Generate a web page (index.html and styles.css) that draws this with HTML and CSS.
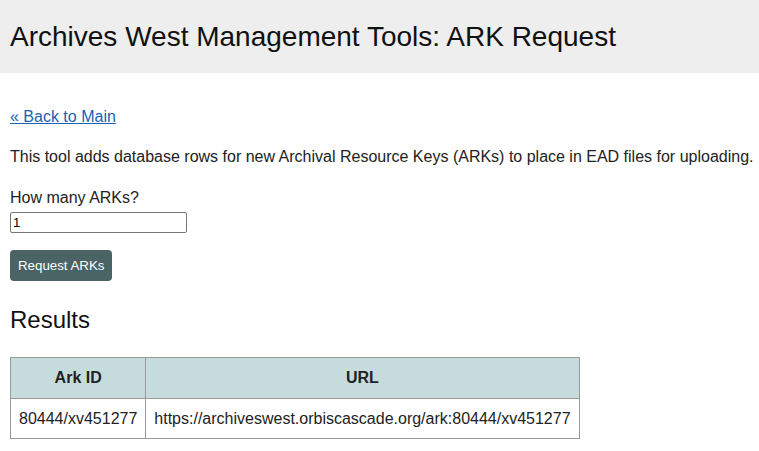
FILE: index.html
```html
<!DOCTYPE html>
<html>
<head>
<meta charset="utf-8">
<link rel="stylesheet" href="styles.css">
</head>
<body>
<header class="site-header">
  <h1 class="title">Archives West Management Tools: ARK Request</h1>
</header>
<main class="content">
  <p class="back"><a href="#">« Back to Main</a></p>
  <p class="intro">This tool adds database rows for new Archival Resource Keys (ARKs) to place in EAD files for uploading.</p>
  <form class="ark-form">
    <label class="field-label" for="count">How many ARKs?</label>
    <input class="field-input" id="count" type="text" value="1">
    <button class="btn" type="button">Request ARKs</button>
  </form>
  <h2 class="results-title">Results</h2>
  <table class="results">
    <thead>
      <tr><th>Ark ID</th><th>URL</th></tr>
    </thead>
    <tbody>
      <tr><td>80444/xv451277</td><td>https://archiveswest.orbiscascade.org/ark:80444/xv451277</td></tr>
    </tbody>
  </table>
</main>
</body>
</html>
```
FILE: styles.css
```css
html, body {
  margin: 0;
  padding: 0;
  background: #fff;
  font-family: "Liberation Sans", Arial, sans-serif;
  color: #222;
  font-size: 16px;
  white-space: nowrap;
}
.site-header {
  background: #eeeeee;
  height: 73px;
  display: flex;
  align-items: center;
  padding: 0 10px;
}
.title {
  margin: 0;
  font-weight: normal;
  font-size: 28px;
  color: #111;
}
.content {
  padding: 0 10px;
}
.back {
  margin: 35px 0 0;
}
.back a {
  color: #1a5fb4;
}
.intro {
  margin: 22px 0 0;
}
.ark-form {
  display: flex;
  flex-direction: column;
  align-items: flex-start;
  margin-top: 23px;
}
.field-label {
  line-height: 18px;
}
.field-input {
  margin-top: 5px;
  width: 171px;
  height: 17px;
  padding: 1px 2px;
  border: 1px solid #767676;
  border-radius: 2px;
  font-family: "Liberation Sans", Arial, sans-serif;
  font-size: 13px;
}
.btn {
  margin-top: 17px;
  background: #4a6466;
  color: #fff;
  border: none;
  border-radius: 4px;
  height: 31px;
  padding: 0 8px;
  font-family: "Liberation Sans", Arial, sans-serif;
  font-size: 13.3px;
}
.results-title {
  margin: 25px 0 0;
  font-weight: normal;
  font-size: 24px;
  color: #111;
}
.results {
  margin-top: 23px;
  border-collapse: collapse;
}
.results th, .results td {
  border: 1px solid #999;
  padding: 0 8px;
  text-align: center;
}
.results th {
  background: #c6dcdc;
  height: 40px;
  font-weight: bold;
}
.results td {
  height: 39px;
}
```
